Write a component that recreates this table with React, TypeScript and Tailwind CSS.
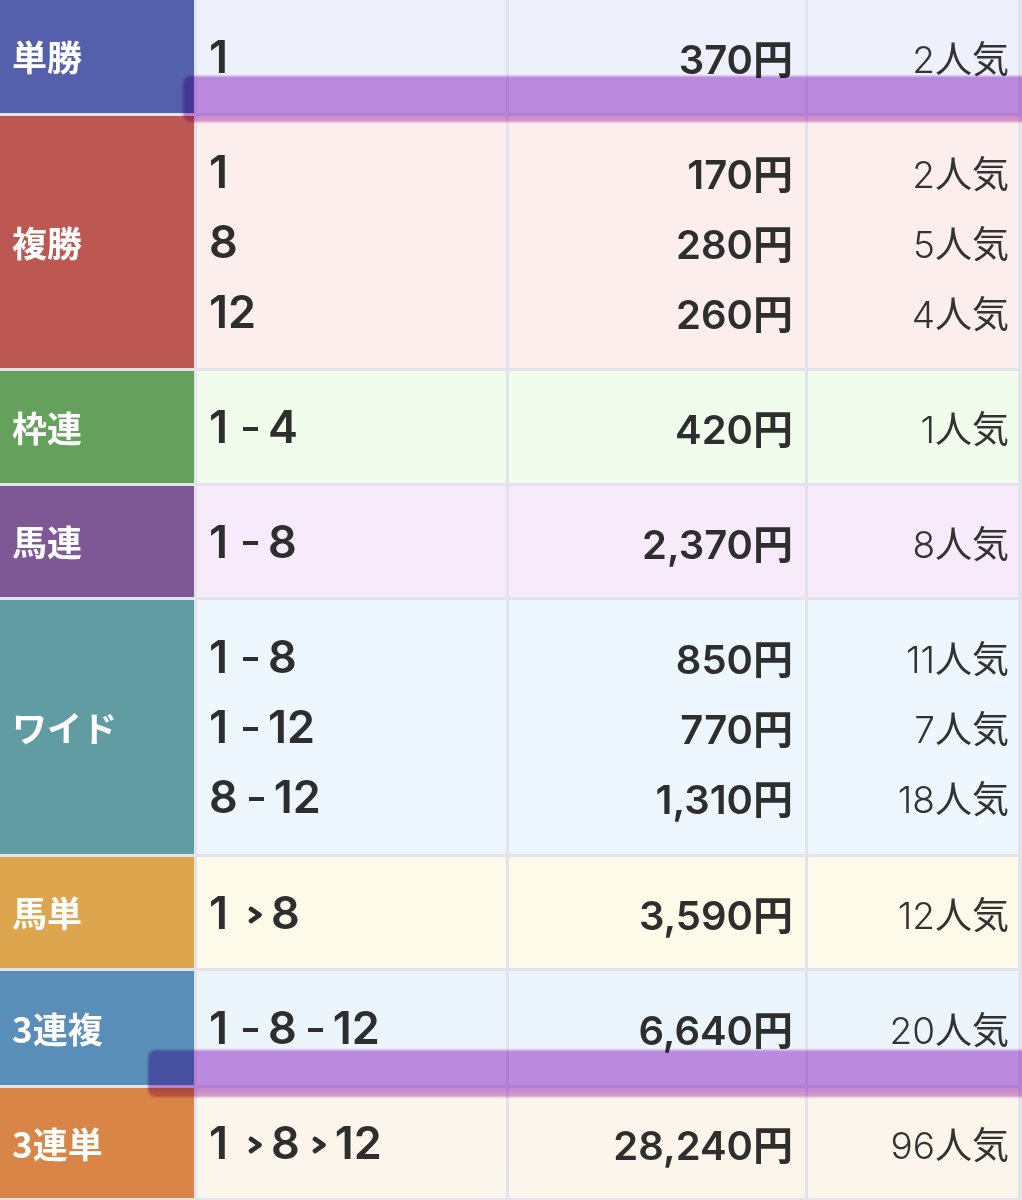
import React from "react";

type Row = {
  label: string;
  labelBg: string;
  cellBg: string;
  h: string;
  items: { combo: string; pay: string; pop: string }[];
};

const rows: Row[] = [
  { label: "単勝", labelBg: "bg-[#5560ac]", cellBg: "bg-[#eef1fc]", h: "h-[113px]", items: [{ combo: "1", pay: "370", pop: "2" }] },
  {
    label: "複勝", labelBg: "bg-[#bd5752]", cellBg: "bg-[#fdeeee]", h: "h-[252px]",
    items: [
      { combo: "1", pay: "170", pop: "2" },
      { combo: "8", pay: "280", pop: "5" },
      { combo: "12", pay: "260", pop: "4" },
    ],
  },
  { label: "枠連", labelBg: "bg-[#65a05d]", cellBg: "bg-[#f2fced]", h: "h-[112px]", items: [{ combo: "1-4", pay: "420", pop: "1" }] },
  { label: "馬連", labelBg: "bg-[#7e5894]", cellBg: "bg-[#f6eafb]", h: "h-[111px]", items: [{ combo: "1-8", pay: "2,370", pop: "8" }] },
  {
    label: "ワイド", labelBg: "bg-[#629ca3]", cellBg: "bg-[#edf7fd]", h: "h-[254px]",
    items: [
      { combo: "1-8", pay: "850", pop: "11" },
      { combo: "1-12", pay: "770", pop: "7" },
      { combo: "8-12", pay: "1,310", pop: "18" },
    ],
  },
  { label: "馬単", labelBg: "bg-[#dda54e]", cellBg: "bg-[#fefaea]", h: "h-[111px]", items: [{ combo: "1›8", pay: "3,590", pop: "12" }] },
  { label: "3連複", labelBg: "bg-[#588eb8]", cellBg: "bg-[#ecf4fc]", h: "h-[114px]", items: [{ combo: "1-8-12", pay: "6,640", pop: "20" }] },
  { label: "3連単", labelBg: "bg-[#d98548]", cellBg: "bg-[#fcf5ec]", h: "h-[110px]", items: [{ combo: "1›8›12", pay: "28,240", pop: "96" }] },
];

const cjk = { fontFamily: '"Noto Sans CJK JP", "Noto Sans", sans-serif' };
const num = { fontFamily: 'Inter, "Noto Sans CJK JP", sans-serif' };

function Combo({ text }: { text: string }) {
  const parts = text.split(/([-›])/);
  return (
    <span className="inline-flex items-center">
      {parts.map((p, i) => {
        const afterOne = i > 0 && parts[i - 1].endsWith("1");
        if (p === "-") {
          return (
            <span
              key={i}
              aria-label="-"
              className={`${afterOne ? "ml-[15px]" : "ml-[11px]"} mr-[10px] inline-block w-[15px] h-[4px] bg-[#2e2e2e] mt-[3px]`}
            />
          );
        }
        if (p === "›") {
          return (
            <svg
              key={i}
              aria-label="›"
              className={`${afterOne ? "ml-[20px]" : "ml-[12px]"} mr-[8px] mt-[4px]`}
              width="15"
              height="18"
              viewBox="0 0 15 18"
            >
              <polyline points="3,3 11.5,9 3,15" fill="none" stroke="#2e2e2e" strokeWidth="4.6" strokeLinecap="round" strokeLinejoin="round" />
            </svg>
          );
        }
        return <span key={i}>{p}</span>;
      })}
    </span>
  );
}

export default function App() {
  return (
    <div className="relative w-[1022px] h-[1200px] overflow-hidden bg-[#e3e3ed]" style={cjk}>
      <div className="flex flex-col gap-[3px] pr-[4px]">
        {rows.map((r) => (
          <div key={r.label} className={`grid grid-cols-[194px_309px_296px_210px] gap-[3px] ${r.h}`}>
            <div className={`${r.labelBg} flex items-center pl-[12px] text-white font-bold text-[35px]`}>
              {r.label}
            </div>
            <div className={`${r.cellBg} flex flex-col justify-center pl-[12px] text-[#2e2e2e] font-semibold text-[45px]`} style={num}>
              {r.items.map((it, i) => (
                <div key={i} className="h-[70px] leading-[70px] flex items-center">
                  <Combo text={it.combo} />
                </div>
              ))}
            </div>
            <div className={`${r.cellBg} flex flex-col justify-center items-end pr-[12px] text-[#2e2e2e] font-semibold text-[40px]`} style={num}>
              {r.items.map((it, i) => (
                <div key={i} className="h-[70px] leading-[70px]">
                  {it.pay}
                  <span className="font-bold" style={cjk}>円</span>
                </div>
              ))}
            </div>
            <div className={`${r.cellBg} flex flex-col justify-center items-end pr-[9px] text-[#333333] text-[37px]`}>
              {r.items.map((it, i) => (
                <div key={i} className="h-[70px] leading-[70px]">
                  <span className="font-light" style={num}>{it.pop}</span>
                  <span className="font-normal">人気</span>
                </div>
              ))}
            </div>
          </div>
        ))}
      </div>
      <div className="absolute left-[183px] top-[76px] w-[845px] h-[46px] rounded-l-[8px] bg-[#c890e0] mix-blend-multiply blur-[1px] border-b-[5px] border-[#d89ad8]" />
      <div className="absolute left-[148px] top-[1050px] w-[880px] h-[47px] rounded-l-[8px] bg-[#c890e0] mix-blend-multiply blur-[1px] border-b-[5px] border-[#d89ad8]" />
    </div>
  );
}
